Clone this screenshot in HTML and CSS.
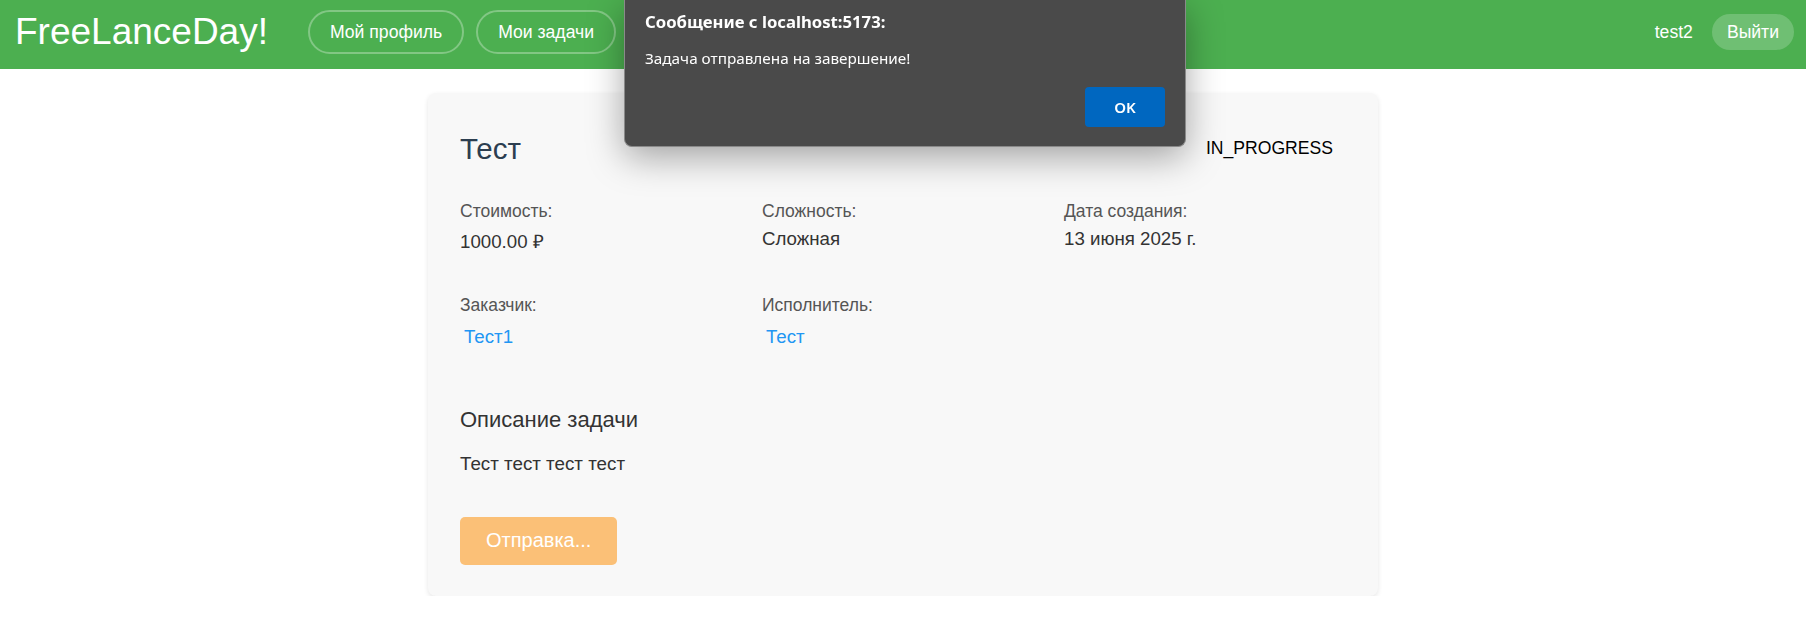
FILE: index.html
```html
<!DOCTYPE html>
<html lang="ru">
<head>
<meta charset="utf-8">
<title>FreeLanceDay!</title>
<link rel="stylesheet" href="styles.css">
</head>
<body>
<header class="topbar">
  <div class="topbar-left">
    <div class="logo">FreeLanceDay!</div>
    <nav class="nav">
      <a class="nav-btn">Мой профиль</a>
      <a class="nav-btn">Мои задачи</a>
    </nav>
  </div>
  <div class="topbar-right">
    <span class="username">test2</span>
    <button class="logout-btn">Выйти</button>
  </div>
</header>

<main class="page">
  <section class="task-card">
    <div class="task-head">
      <h2 class="task-title">Тест</h2>
      <span class="task-status">IN_PROGRESS</span>
    </div>

    <div class="info-grid">
      <div class="info-item">
        <div class="info-label">Стоимость:</div>
        <div class="info-value">1000.00 ₽</div>
      </div>
      <div class="info-item">
        <div class="info-label">Сложность:</div>
        <div class="info-value">Сложная</div>
      </div>
      <div class="info-item">
        <div class="info-label">Дата создания:</div>
        <div class="info-value">13 июня 2025 г.</div>
      </div>
      <div class="info-item">
        <div class="info-label">Заказчик:</div>
        <button class="user-link">Тест1</button>
      </div>
      <div class="info-item">
        <div class="info-label">Исполнитель:</div>
        <button class="user-link">Тест</button>
      </div>
    </div>

    <div class="description">
      <h3 class="desc-title">Описание задачи</h3>
      <p class="desc-text">Тест тест тест тест</p>
    </div>

    <button class="submit-btn" disabled>Отправка...</button>
  </section>
</main>

<div class="alert-dialog" role="alertdialog">
  <div class="alert-title">Сообщение с localhost:5173:</div>
  <div class="alert-message">Задача отправлена на завершение!</div>
  <div class="alert-actions">
    <button class="alert-ok">OK</button>
  </div>
</div>
</body>
</html>
```

FILE: styles.css
```css
* { box-sizing: border-box; }

html, body {
  margin: 0;
  padding: 0;
  background: #ffffff;
  font-family: "Liberation Sans", Arial, sans-serif;
}

.topbar {
  height: 69px;
  background: #4caf50;
  display: flex;
  align-items: center;
  justify-content: space-between;
  padding: 0 12px 5px 15px;
  color: #fff;
}

.topbar-left {
  display: flex;
  align-items: center;
}

.logo {
  font-size: 37px;
  color: #fff;
  margin-right: 40px;
  line-height: 1.15;
}

.nav {
  display: flex;
  gap: 12px;
}

.nav-btn {
  display: inline-block;
  font-size: 17.6px;
  line-height: 20px;
  color: #fff;
  padding: 10px 20px;
  border: 2px solid rgba(255, 255, 255, 0.3);
  border-radius: 24px;
  text-decoration: none;
}

.topbar-right {
  display: flex;
  align-items: center;
  gap: 19px;
}

.username {
  font-size: 17.6px;
  color: #fff;
}

.logout-btn {
  font-family: inherit;
  font-size: 17.6px;
  line-height: 20px;
  color: #fff;
  background: rgba(255, 255, 255, 0.2);
  border: none;
  border-radius: 18px;
  padding: 8px 15px;
}

.page {
  padding-top: 24px;
  display: flex;
  justify-content: center;
}

.task-card {
  width: 950px;
  background: #f8f8f8;
  border-radius: 8px;
  box-shadow: 0 2px 5px rgba(0, 0, 0, 0.1);
  padding: 32px 32px 31px;
}

.task-head {
  display: flex;
  justify-content: space-between;
  align-items: center;
  min-height: 47px;
  margin-bottom: 29px;
}

.task-title {
  margin: 0;
  font-size: 29.5px;
  font-weight: normal;
  color: #2c3e50;
}

.task-status {
  font-size: 17.6px;
  color: #000;
  padding: 6px 13px;
}

.info-grid {
  display: grid;
  grid-template-columns: repeat(3, 1fr);
  column-gap: 20px;
  row-gap: 42px;
  margin-bottom: 55px;
}

.info-label {
  font-size: 17.5px;
  color: #555;
  margin-bottom: 6px;
}

.info-value {
  font-size: 18.7px;
  color: #333;
}

.user-link {
  font-family: inherit;
  font-size: 18.7px;
  line-height: 1.15;
  color: #2196f3;
  background: none;
  border: none;
  padding: 4px;
  cursor: pointer;
}

.desc-title {
  margin: 0 0 20px;
  font-size: 22px;
  font-weight: normal;
  color: #333;
}

.desc-text {
  margin: 0 0 42px;
  font-size: 18.8px;
  color: #333;
}

.submit-btn {
  font-family: inherit;
  font-size: 20px;
  color: #fff;
  background: #fbc077;
  border: none;
  border-radius: 5px;
  padding: 0 26px;
  height: 48px;
}

.alert-dialog {
  position: fixed;
  top: 0;
  left: 624px;
  width: 562px;
  height: 147px;
  background: #4a4a4a;
  border: 1px solid #8a8a8a;
  border-top: none;
  border-radius: 0 0 8px 8px;
  box-shadow: 0 10px 36px rgba(0, 0, 0, 0.35);
  padding: 0 20px 19px 20px;
  display: flex;
  flex-direction: column;
  font-family: "Noto Sans", "Open Sans", sans-serif;
  color: #fff;
}

.alert-title {
  font-weight: bold;
  font-size: 16.7px;
  margin-top: 10px;
}

.alert-message {
  font-size: 15.3px;
  margin-top: 15px;
}

.alert-actions {
  margin-top: auto;
  display: flex;
  justify-content: flex-end;
}

.alert-ok {
  width: 80px;
  height: 40px;
  background: #0067c0;
  color: #fff;
  border: none;
  border-radius: 4px;
  font-family: "Noto Sans", "Open Sans", sans-serif;
  font-weight: 600;
  font-size: 15px;
}
```
